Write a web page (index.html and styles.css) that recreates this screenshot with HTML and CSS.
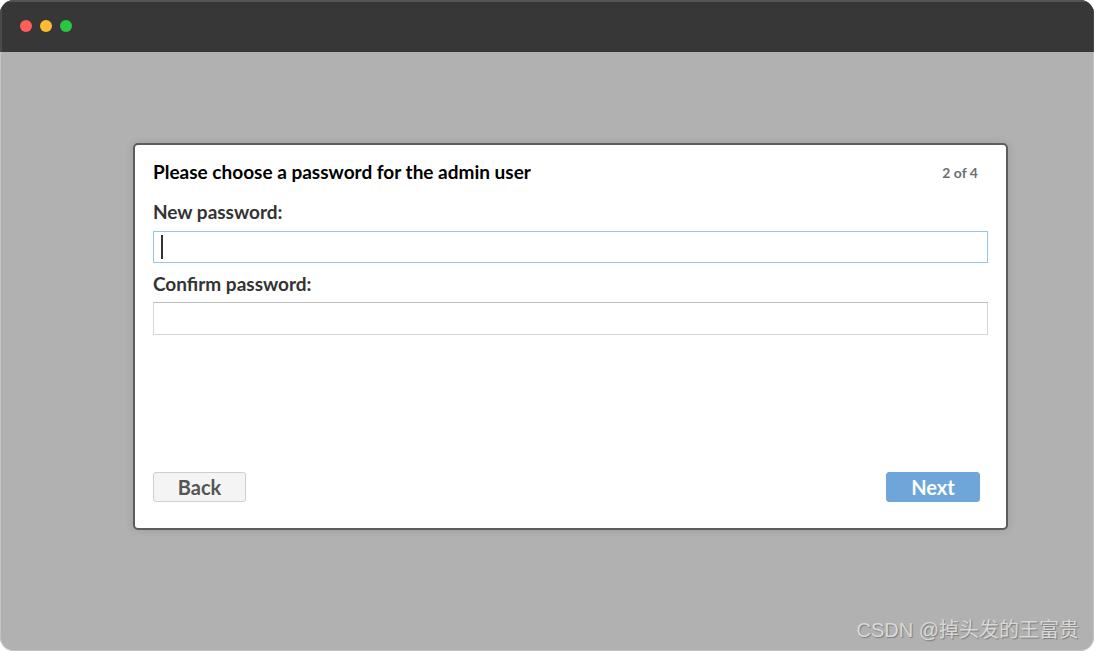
FILE: index.html
```html
<!DOCTYPE html>
<html lang="en">
<head>
<meta charset="utf-8">
<title>Setup</title>
<link rel="stylesheet" href="styles.css">
</head>
<body>
<div class="window">
  <header class="titlebar">
    <span class="dot dot-red"></span>
    <span class="dot dot-yellow"></span>
    <span class="dot dot-green"></span>
  </header>
  <main class="stage">
    <section class="dialog">
      <div class="dialog-head">
        <h1 class="dialog-title">Please choose a password for the admin user</h1>
        <span class="step">2 of 4</span>
      </div>
      <label class="field-label" for="pw1">New password:</label>
      <div class="input input-focus" id="pw1"><span class="caret"></span></div>
      <label class="field-label field-label-second" for="pw2">Confirm password:</label>
      <div class="input input-second" id="pw2"></div>
      <div class="actions">
        <button class="btn btn-back" type="button">Back</button>
        <button class="btn btn-next" type="button">Next</button>
      </div>
    </section>
  </main>
  <div class="watermark">CSDN @掉头发的王富贵</div>
</div>
</body>
</html>
```
FILE: styles.css
```css
* { box-sizing: border-box; }
html, body { margin: 0; padding: 0; background: #fff; }
body { width: 1094px; height: 651px; overflow: hidden; font-family: "Lato", "Liberation Sans", sans-serif; }
.window {
  position: relative;
  width: 1094px;
  height: 651px;
  border-radius: 14px;
  overflow: hidden;
  display: flex;
  flex-direction: column;
  background: #b1b1b1;
  box-shadow: inset 0 0 0 1px #c4c4c4;
}
.titlebar {
  height: 52px;
  flex: none;
  display: flex;
  align-items: center;
  gap: 8px;
  padding: 0 0 0 20px;
  background: #373737;
  border-top: 2px solid #555;
  border-left: 2px solid #4a4a4a;
  border-right: 1px solid #4a4a4a;
  padding-left: 18px;
}
.dot { width: 12px; height: 12px; border-radius: 50%; margin-top: -2px; }
.dot-red { background: #ff5f57; }
.dot-yellow { background: #febc2e; }
.dot-green { background: #28c840; }
.stage { flex: 1; padding: 91px 0 0 133px; }
.dialog {
  width: 875px;
  height: 387px;
  background: #fff;
  border: 2px solid #5c5c5c;
  border-radius: 5px;
  padding: 15px 18px 26px 18px;
  display: flex;
  flex-direction: column;
  box-shadow: 0 0 8px rgba(0,0,0,.12);
}
.dialog-head { display: flex; justify-content: space-between; align-items: center; height: 24px; padding-right: 10px; }
.dialog-title { margin: 0; font-size: 19px; line-height: 24px; font-weight: 700; color: #000; }
.step { font-size: 14px; font-weight: 700; color: #6f6f6f; }
.field-label { display: block; margin-top: 16px; font-size: 19px; line-height: 24px; font-weight: 700; color: #333; }
.field-label-second { margin-top: 9px; }
.input { width: 835px; height: 32px; margin-top: 7px; background: #fff; border: 1px solid #d6d6d6; border-top-color: #bdbdbd; display: flex; align-items: center; padding-left: 7px; }
.input-focus { border-color: #97c5ea; }
.input-second { height: 33px; margin-top: 6px; }
.caret { width: 2px; height: 24px; background: #333; }
.actions { margin-top: auto; display: flex; justify-content: space-between; padding-right: 8px; }
.btn { height: 30px; border-radius: 3px; font-family: inherit; font-size: 20px; font-weight: 700; line-height: 26px; padding: 0; }
.btn-back { width: 93px; background: #f4f4f4; border: 1px solid #cfcfcf; color: #555; }
.btn-next { width: 94px; background: #6fa6da; border: 1px solid #6fa6da; color: #fff; }
.watermark {
  position: absolute;
  right: 15px;
  bottom: 8px;
  font-family: "Liberation Sans", "Noto Sans CJK SC", sans-serif;
  font-size: 20px;
  line-height: 26px;
  color: #d8d8d8;
  text-shadow: 1px 1px 1px rgba(0,0,0,.3);
}
```
